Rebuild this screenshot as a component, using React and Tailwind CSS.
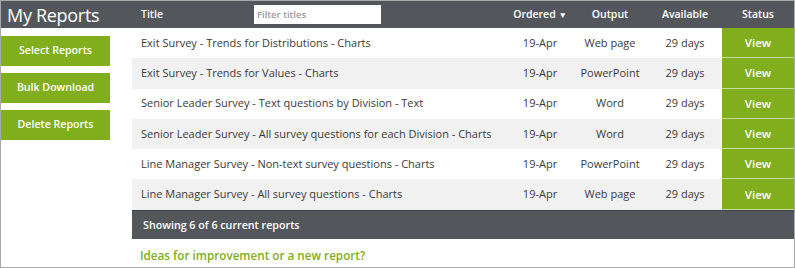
import React from "react";

const reports = [
  { title: "Exit Survey - Trends for Distributions - Charts", ordered: "19-Apr", output: "Web page", available: "29 days" },
  { title: "Exit Survey - Trends for Values - Charts", ordered: "19-Apr", output: "PowerPoint", available: "29 days" },
  { title: "Senior Leader Survey - Text questions by Division - Text", ordered: "19-Apr", output: "Word", available: "29 days" },
  { title: "Senior Leader Survey - All survey questions for each Division - Charts", ordered: "19-Apr", output: "Word", available: "29 days" },
  { title: "Line Manager Survey - Non-text survey questions - Charts", ordered: "19-Apr", output: "PowerPoint", available: "29 days" },
  { title: "Line Manager Survey - All survey questions - Charts", ordered: "19-Apr", output: "Web page", available: "29 days" },
];

const SideButton = ({ children }) => (
  <button className="flex h-[30px] w-[109px] items-center justify-center bg-[#80ae1c] text-[10.6px] font-semibold text-white">
    {children}
  </button>
);

export default function App() {
  return (
    <div
      className="h-[268px] w-[795px] overflow-hidden border border-[#a9a9a9] bg-white text-[#3a3a3a]"
      style={{ fontFamily: '"Open Sans", "Liberation Sans", sans-serif' }}
    >
      <div className="flex h-[27px] items-center whitespace-nowrap bg-[#53575b] text-white">
        <div className="w-[131px] pl-[6px] text-[18px] leading-none tracking-[-0.3px]">My Reports</div>
        <div className="flex w-[370px] items-center text-[10.5px] font-semibold">
          <span className="w-[122px] pl-[9px]">Title</span>
          <input
            placeholder="Filter titles"
            className="h-[19px] w-[127px] bg-white px-[3px] text-[9.5px] text-[#333] placeholder:text-[#999] outline-none"
          />
        </div>
        <div className="w-[70px] pl-[6px] text-center text-[10.5px] font-semibold">
          Ordered <span className="text-[8.5px]">▼</span>
        </div>
        <div className="w-[76px] text-center text-[10.5px] font-semibold">Output</div>
        <div className="w-[74px] text-center text-[10.5px] font-semibold">Available</div>
        <div className="flex-1 text-center text-[10.5px] font-semibold">Status</div>
      </div>
      <div className="flex">
        <div className="flex w-[131px] flex-col gap-[7px] pt-[8px]">
          <SideButton>Select Reports</SideButton>
          <SideButton>Bulk Download</SideButton>
          <SideButton>Delete Reports</SideButton>
        </div>
        <div className="flex-1">
          {reports.map((r, i) => (
            <div
              key={i}
              className={`flex h-[30.3px] items-center whitespace-nowrap text-[11px] ${i % 2 === 1 ? "bg-[#f1f1f1]" : "bg-white"}`}
            >
              <div className="w-[370px] pl-[9px]">{r.title}</div>
              <div className="w-[70px] pl-[6px] text-center">{r.ordered}</div>
              <div className="w-[76px] text-center">{r.output}</div>
              <div className="w-[74px] text-center">{r.available}</div>
              <div className="flex h-full flex-1 items-center justify-center border-b border-[#c6dd9e] bg-[#80ae1c] text-[11.5px] font-semibold text-white">
                View
              </div>
            </div>
          ))}
          <div className="flex h-[29px] items-center border-t border-[#3f4245] bg-[#53575b] pl-[11px] text-[10.7px] font-semibold text-white">
            Showing 6 of 6 current reports
          </div>
          <div className="pl-[8px] pt-[8px] text-[11.7px] font-semibold text-[#80ae1c]">
            Ideas for improvement or a new report?
          </div>
        </div>
      </div>
    </div>
  );
}
